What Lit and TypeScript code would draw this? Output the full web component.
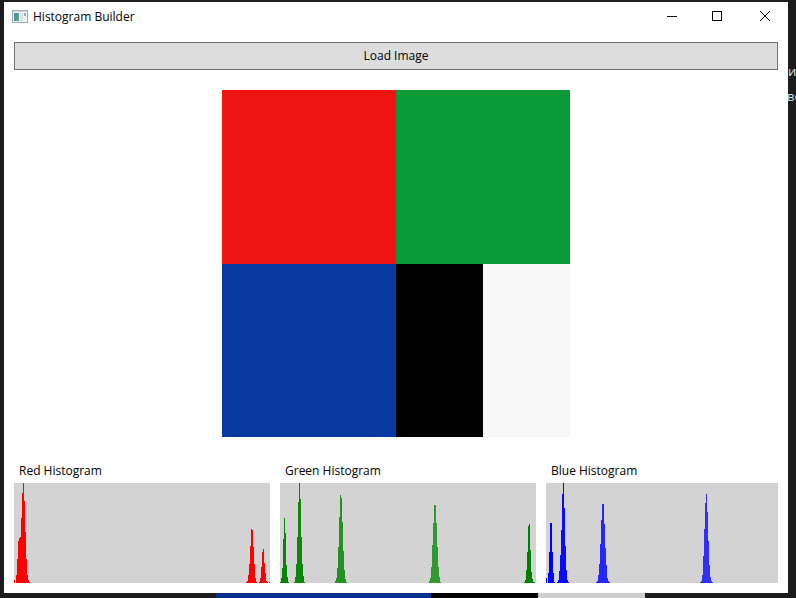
import { LitElement, html, css, svg } from "lit";
import { customElement, property } from "lit/decorators.js";

type Run = [number, number[]];

const RED: Run[] = [
  [0, [3, 0, 8, 24, 42, 45, 46, 65, 90, 100, 82, 51, 24, 8, 3, 1]],
  [232, [1, 2, 8, 19, 37, 54, 53, 36, 19, 5, 1]],
  [245, [1, 5, 16, 31, 34, 20, 10, 2, 1, 0, 1]],
];
const GREEN: Run[] = [
  [0, [1, 5, 15, 44, 65, 50, 18, 6, 1]],
  [14, [1, 6, 19, 46, 81, 100, 84, 46, 19, 7, 1]],
  [55, [2, 5, 15, 36, 66, 88, 85, 61, 32, 13, 4, 1]],
  [149, [2, 5, 16, 38, 60, 78, 78, 60, 36, 16, 6, 1]],
  [244, [1, 3, 13, 31, 57, 59, 33, 11, 4, 1, 1]],
];
const BLUE: Run[] = [
  [0, [5, 0, 10, 31, 60, 60, 31, 10, 1]],
  [11, [1, 3, 12, 28, 53, 89, 100, 75, 37, 13, 3, 1]],
  [50, [1, 2, 8, 19, 39, 63, 79, 79, 59, 35, 18, 5, 2, 1]],
  [154, [1, 2, 8, 27, 54, 80, 89, 71, 42, 18, 6, 2, 1]],
];
const SHADES: Record<string, string[]> = {
  red: ["#ff0000", "#ff0000", "#ff0000"],
  green: ["#078407", "#0b860b", "#259125", "#329832", "#008000"],
  blue: ["#0000ff", "#0a0aff", "#2626ff", "#3030f6"],
};

@customElement("histogram-view")
export class HistogramView extends LitElement {
  @property() label = "";
  @property() tone = "red";
  @property({ attribute: false }) runs: Run[] = [];

  static styles = css`
    :host { display: block; min-width: 0; }
    .label { height: 26px; padding-left: 5px; line-height: 28px; font-size: 12px; box-sizing: border-box; white-space: nowrap; }
    .plot { display: block; width: 100%; height: 100px; background: #d3d3d3; }
  `;

  render() {
    return html`
      <div class="label">${this.label}</div>
      <svg class="plot" shape-rendering="crispEdges">
        ${this.runs.map(([start, values], i) => svg`<path fill=${SHADES[this.tone][i]}
          d=${values.map((v, k) => `M${start + k} 100v${-v}h1v${v}z`).join("")}></path>`)}
      </svg>`;
  }
}

@customElement("app-root")
export class AppRoot extends LitElement {
  static styles = css`
    :host {
      display: block; position: relative; width: 796px; height: 598px; overflow: hidden;
      background: #1c1c1c; color: #000; font-family: "Open Sans", "Noto Sans", sans-serif; font-size: 12px;
    }
    .behind { position: absolute; color: #ddd; white-space: nowrap; line-height: 16px; font-size: 13px; }
    .line-top { left: 440px; top: -11px; letter-spacing: 0.2px; }
    .line-a { left: 788px; top: 63px; }
    .line-b { left: 787px; top: 88px; }
    .strip { position: absolute; left: 216px; top: 592px; display: flex; height: 6px; }
    .strip-blue { width: 215px; background: #06308a; }
    .strip-black { width: 107px; background: #000; }
    .strip-white { width: 107px; background: #cfcfcf; }
    .window {
      position: relative; box-sizing: border-box; margin-left: 4px; width: 784px; height: 593px; top: 0;
      display: flex; flex-direction: column; background: #fff;
      border-top: 2px solid #202020;
    }
    .title { display: flex; align-items: center; height: 30px; padding-left: 8px; flex: none; }
    .app-icon { width: 16px; height: 16px; margin-right: 5px; }
    .name { flex: 1; line-height: 30px; }
    .ctl { width: 46px; height: 30px; display: block; }
    .body { display: flex; flex-direction: column; padding: 10px; }
    .load {
      box-sizing: border-box; height: 28px; width: 764px; border: 1px solid #707070; border-radius: 0; background: #ddd;
      font: inherit; color: #000; padding: 0; line-height: 26px; text-align: center;
    }
    .picture {
      display: grid; grid-template-columns: 174px 87px 87px; grid-template-rows: 174px 173px;
      margin: 20px auto 0 208px; width: 348px;
    }
    .r { background: #ee1414; }
    .g { background: #0a9b38; grid-column: span 2; }
    .b { background: #073b9f; }
    .k { background: #010101; }
    .w { background: #f8f8f8; }
    .charts { display: grid; grid-template-columns: 256px 256px 232px; column-gap: 10px; margin-top: 20px; }
  `;

  render() {
    return html`
      <div class="behind line-top">гистограмма моей программой:</div>
      <div class="behind line-a">и</div>
      <div class="behind line-b">во</div>
      <div class="strip"><div class="strip-blue"></div><div class="strip-black"></div><div class="strip-white"></div></div>
      <div class="window">
        <div class="title">
          <svg class="app-icon" viewBox="0 0 16 16">
            <defs><linearGradient id="pane" x2="1" y2="1"><stop stop-color="#4b86b5"></stop><stop offset="1" stop-color="#57ad83"></stop></linearGradient></defs>
            <rect x="0.5" y="1.5" width="15" height="12" fill="#f3f3f5" stroke="#a4abb3"></rect>
            <path d="M1 2.5h14" stroke="#d3d9df"></path>
            <rect x="2" y="4" width="5" height="8" fill="url(#pane)"></rect>
            <rect x="8" y="4" width="3" height="8" fill="#e1e1e5"></rect>
            <rect x="12" y="4" width="2" height="3" fill="#88b9b4"></rect>
          </svg>
          <span class="name">Histogram Builder</span>
          <svg class="ctl" viewBox="0 0 46 30"><path d="M17 14.5h10" stroke="#000"></path></svg>
          <svg class="ctl" viewBox="0 0 46 30"><rect x="16.5" y="9.5" width="9" height="9" fill="none" stroke="#000"></rect></svg>
          <svg class="ctl" viewBox="0 0 46 30"><path d="M18 9l10 10M28 9l-10 10" stroke="#000"></path></svg>
        </div>
        <div class="body">
          <button class="load">Load Image</button>
          <div class="picture">
            <div class="r"></div><div class="g"></div><div class="b"></div><div class="k"></div><div class="w"></div>
          </div>
          <div class="charts">
            <histogram-view label="Red Histogram" tone="red" .runs=${RED}></histogram-view>
            <histogram-view label="Green Histogram" tone="green" .runs=${GREEN}></histogram-view>
            <histogram-view label="Blue Histogram" tone="blue" .runs=${BLUE}></histogram-view>
          </div>
        </div>
      </div>`;
  }
}
